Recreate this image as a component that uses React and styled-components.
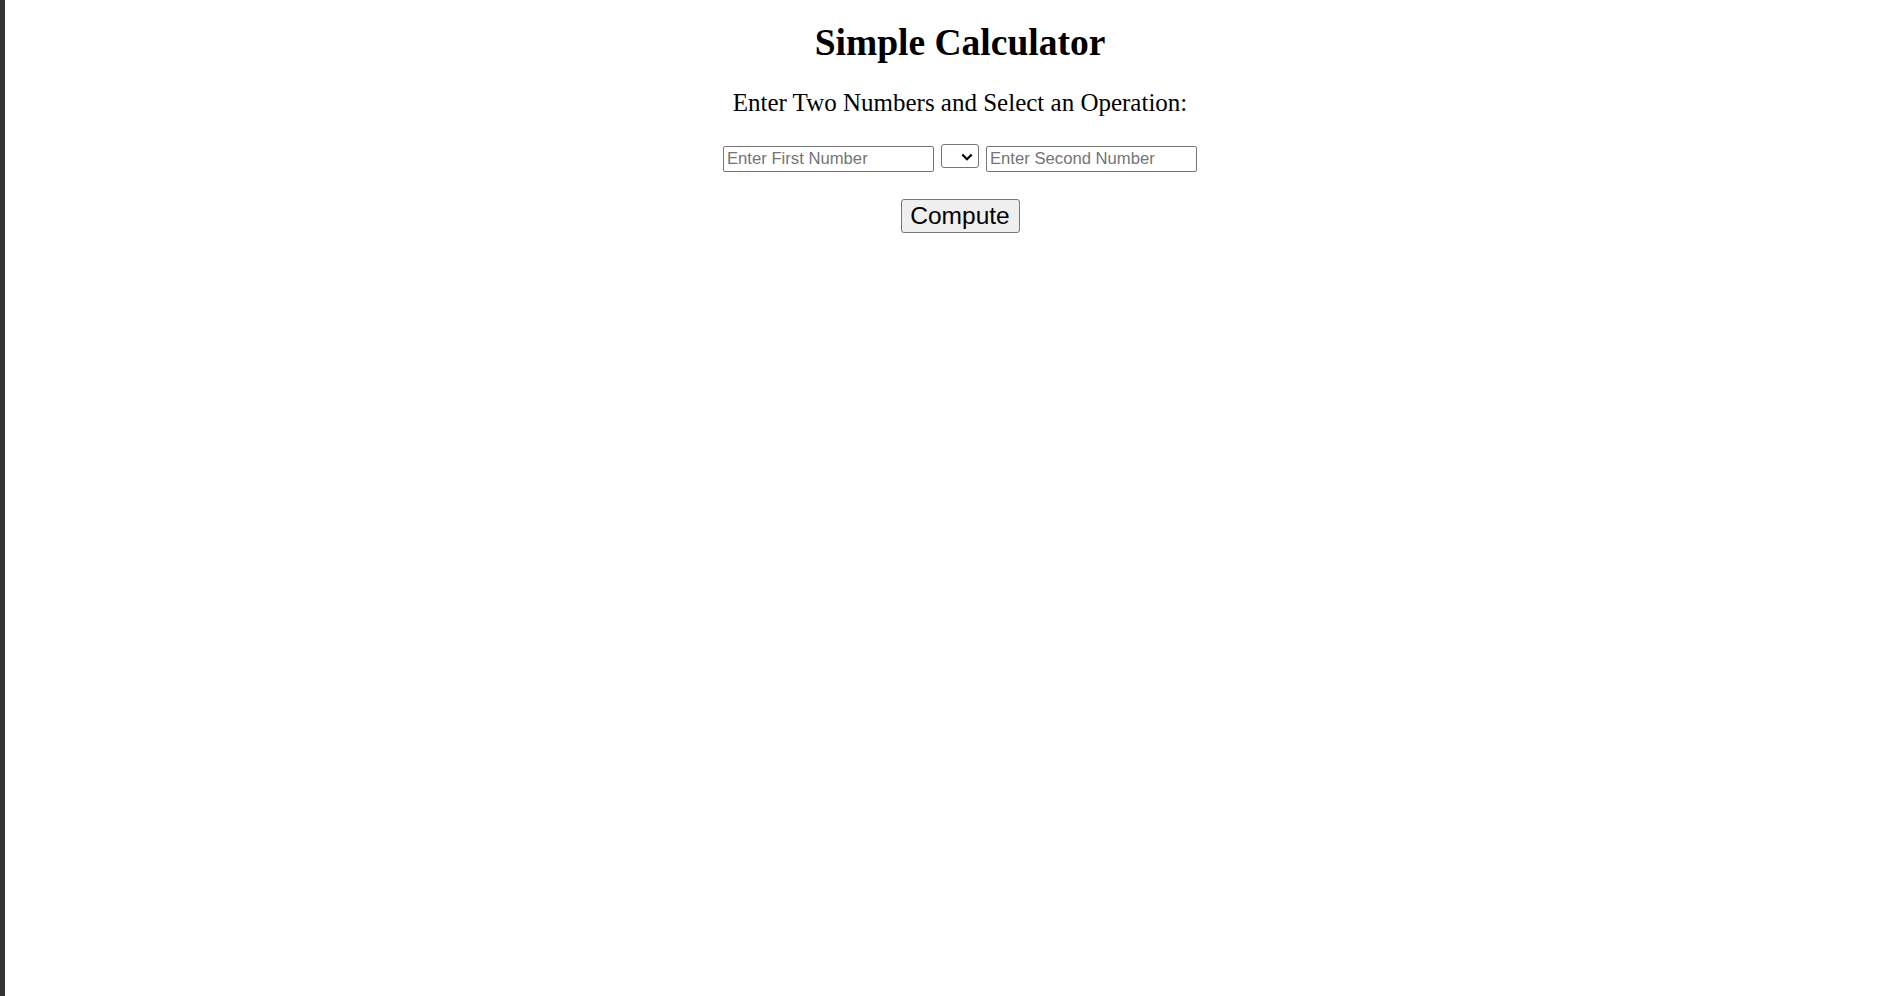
import React, { useState } from "react";
import styled, { createGlobalStyle } from "styled-components";

const GlobalStyle = createGlobalStyle`
  html, body {
    margin: 0;
    padding: 0;
    height: 100%;
    background: #ffffff;
    overflow: hidden;
  }
  #root {
    height: 100%;
  }
`;

const Page = styled.div`
  display: flex;
  height: 100vh;
  background: #ffffff;
`;

const Edge = styled.div`
  flex: 0 0 5px;
  background: #333333;
`;

const Main = styled.main`
  flex: 1;
  display: flex;
  flex-direction: column;
  align-items: center;
  padding: 22px 0 0 24px;
  font-family: "Liberation Serif", "Times New Roman", serif;
  color: #000000;
`;

const Title = styled.h1`
  margin: 0;
  font-size: 37.5px;
  line-height: 42px;
  font-weight: 700;
`;

const Subtitle = styled.p`
  margin: 24.5px 0 0;
  font-size: 25px;
  line-height: 28px;
  font-weight: 400;
`;

const Row = styled.div`
  display: flex;
  align-items: flex-start;
  gap: 7px;
  margin-top: 27.5px;
`;

const NumberInput = styled.input`
  box-sizing: border-box;
  width: 211px;
  height: 26px;
  margin: 2px 0 0;
  padding: 0 3px;
  border: 1px solid #767676;
  border-radius: 2px;
  font-family: "Liberation Sans", Arial, sans-serif;
  font-size: 16.67px;
  color: #000000;
  background: #ffffff;
  outline: none;

  &::placeholder {
    color: #757575;
    opacity: 1;
  }
`;

const SelectWrap = styled.div`
  position: relative;
  width: 38px;
  height: 24px;
`;

const OpSelect = styled.select`
  box-sizing: border-box;
  width: 38px;
  height: 24px;
  margin: 0;
  padding: 0 4px;
  border: 1px solid #767676;
  border-radius: 3px;
  background: #ffffff;
  appearance: none;
  -webkit-appearance: none;
  font-family: "Liberation Sans", Arial, sans-serif;
  font-size: 16.67px;
  color: #000000;
  outline: none;
`;

const Chevron = styled.svg`
  position: absolute;
  right: 6px;
  top: 9px;
  width: 12px;
  height: 8px;
  pointer-events: none;
`;

const ComputeButton = styled.button`
  box-sizing: border-box;
  width: 119px;
  height: 34px;
  margin-top: 27px;
  padding: 0;
  border: 1px solid #767676;
  border-radius: 3px;
  background: #efefef;
  font-family: "Liberation Sans", Arial, sans-serif;
  font-size: 24.5px;
  color: #000000;
  cursor: pointer;
`;

export default function App() {
  const [a, setA] = useState("");
  const [b, setB] = useState("");
  const [op, setOp] = useState("");

  return (
    <>
      <GlobalStyle />
      <Page>
        <Edge />
        <Main>
          <Title>Simple Calculator</Title>
          <Subtitle>Enter Two Numbers and Select an Operation:</Subtitle>
          <Row>
            <NumberInput
              type="text"
              placeholder="Enter First Number"
              value={a}
              onChange={(e) => setA(e.target.value)}
            />
            <SelectWrap>
              <OpSelect value={op} onChange={(e) => setOp(e.target.value)}>
                <option value=""></option>
                <option value="+">+</option>
                <option value="-">-</option>
                <option value="*">*</option>
                <option value="/">/</option>
              </OpSelect>
              <Chevron viewBox="0 0 12 8" aria-hidden="true">
                <path
                  d="M1.3 1.5 L6 6.2 L10.7 1.5"
                  fill="none"
                  stroke="#000000"
                  strokeWidth="2.2"
                />
              </Chevron>
            </SelectWrap>
            <NumberInput
              type="text"
              placeholder="Enter Second Number"
              value={b}
              onChange={(e) => setB(e.target.value)}
            />
          </Row>
          <ComputeButton type="button">Compute</ComputeButton>
        </Main>
      </Page>
    </>
  );
}
